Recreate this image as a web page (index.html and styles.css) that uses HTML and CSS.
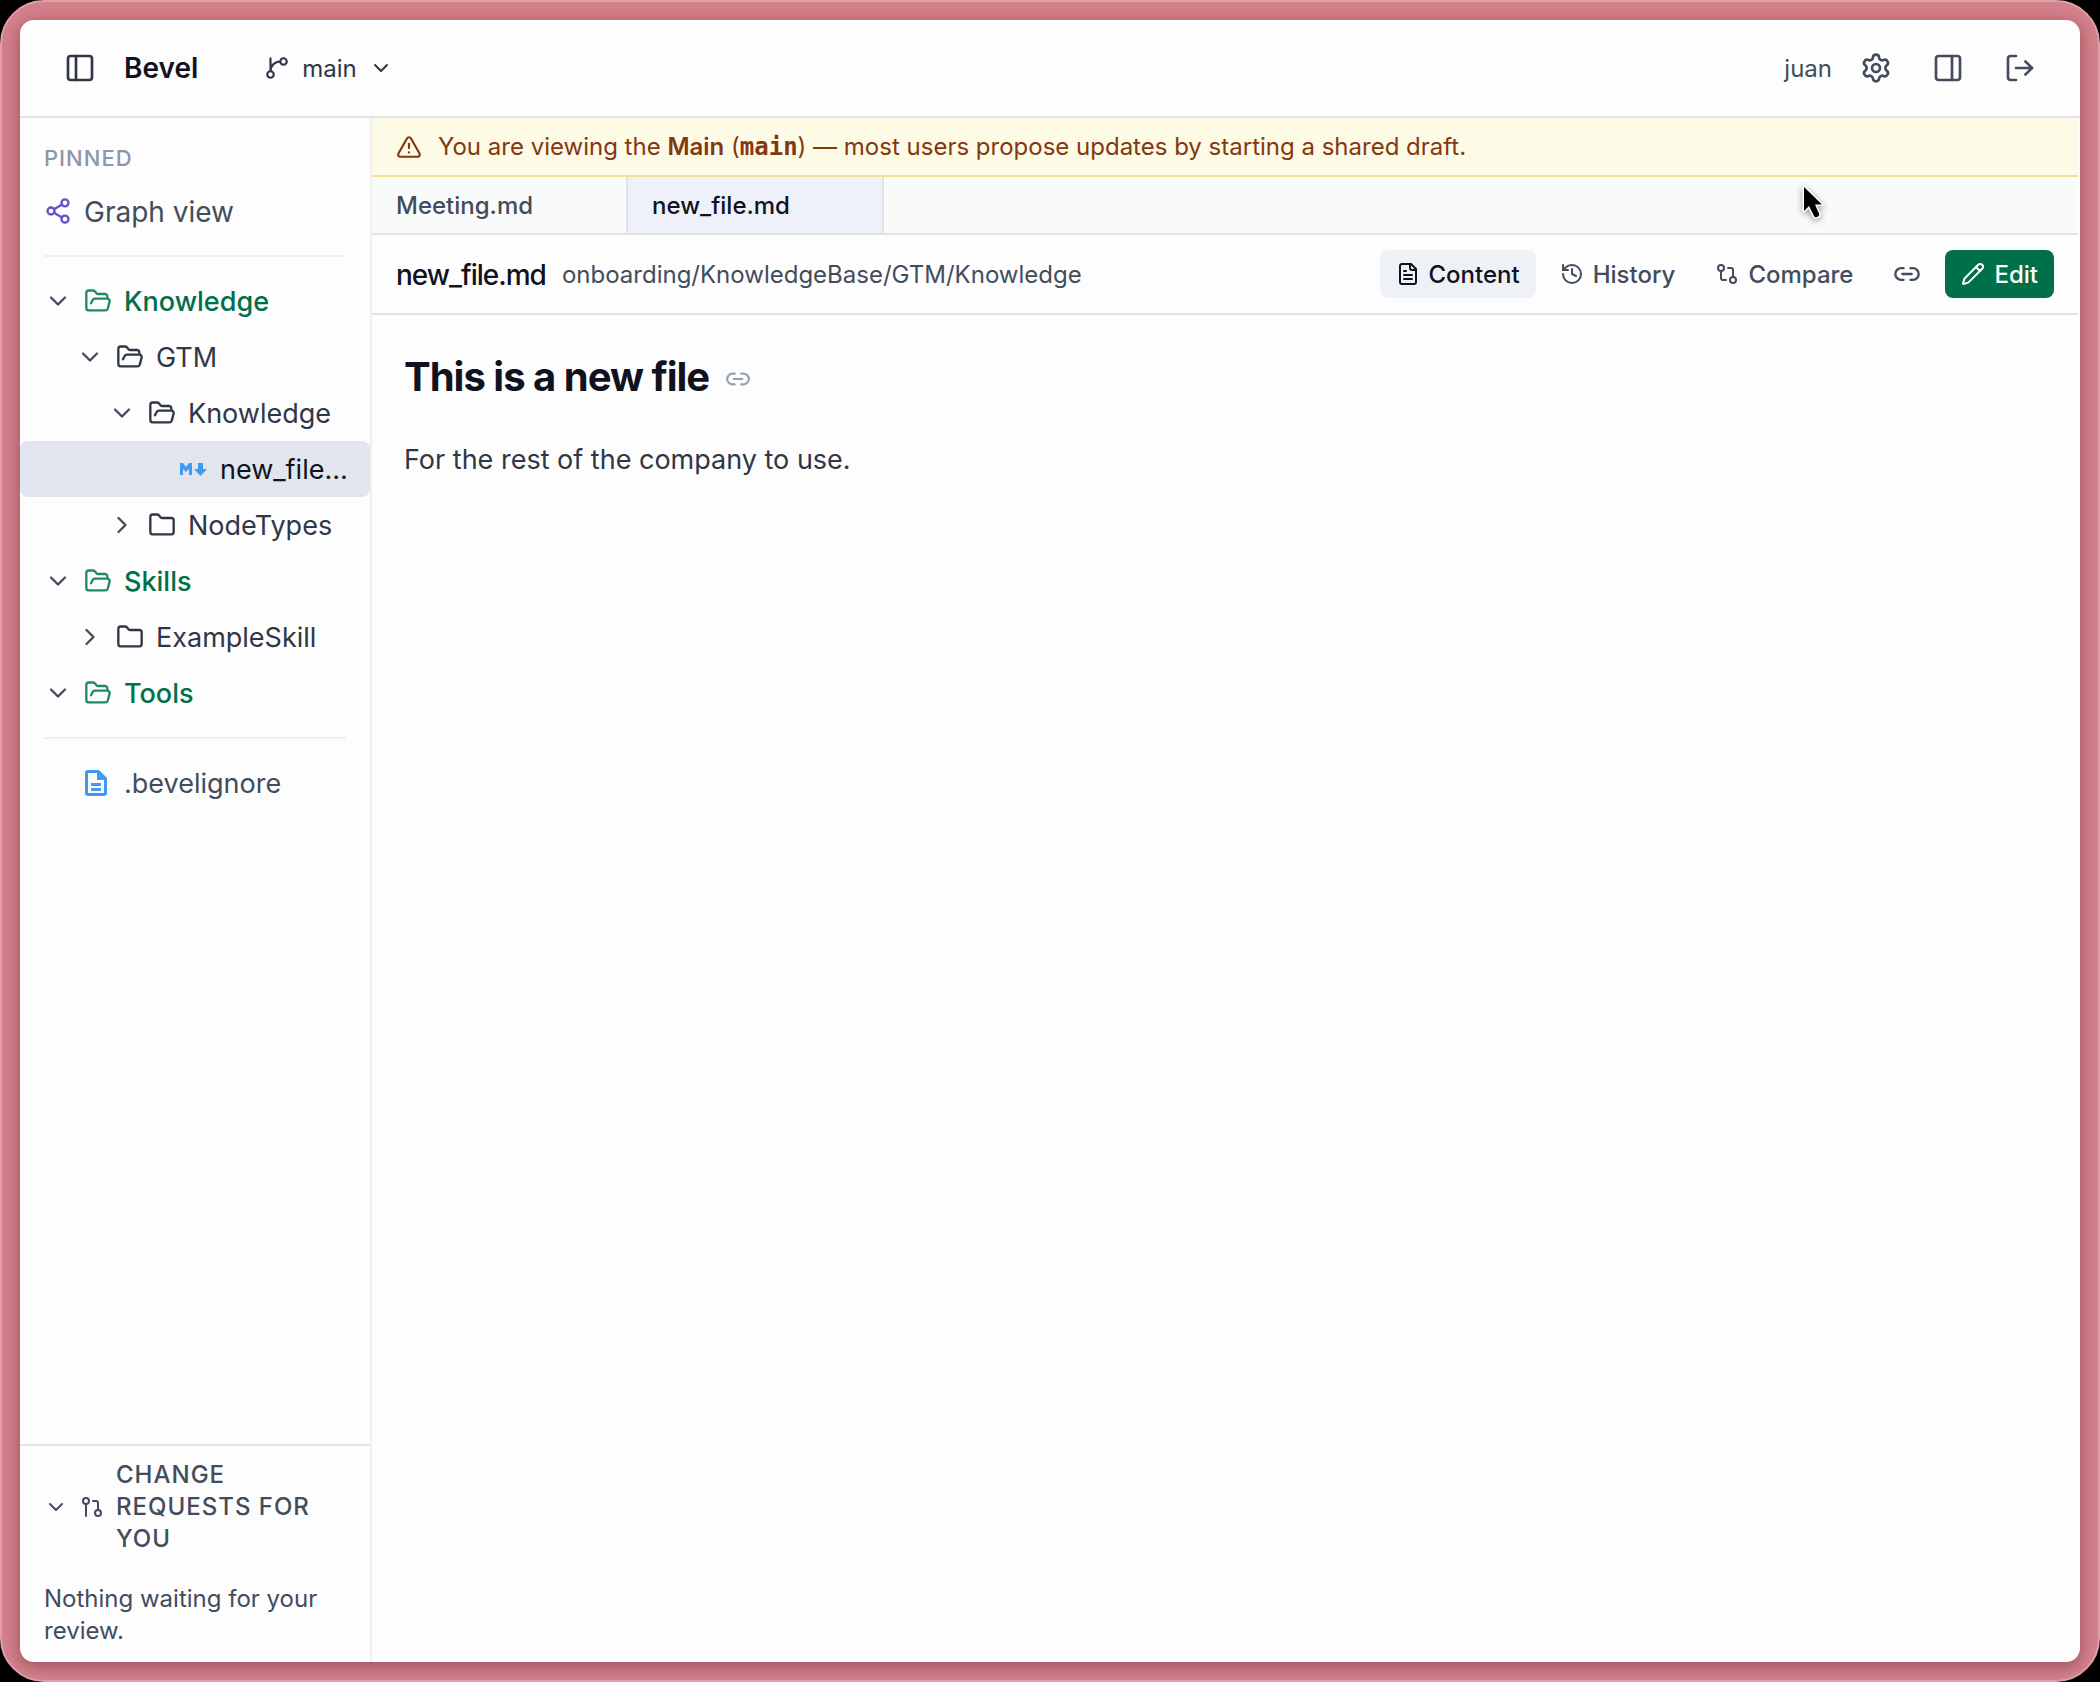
FILE: index.html
```
<!DOCTYPE html>
<html lang="en">
<head>
<meta charset="utf-8">
<meta name="viewport" content="width=device-width, initial-scale=1">
<title>Bevel</title>
<link rel="stylesheet" href="styles.css">
</head>
<body>
<svg class="sprite" aria-hidden="true">
  <symbol id="panel-left" viewBox="0 0 24 24"><rect width="18" height="18" x="3" y="3" rx="2"/><path d="M9 3v18"/></symbol>
  <symbol id="panel-right" viewBox="0 0 24 24"><rect width="18" height="18" x="3" y="3" rx="2"/><path d="M15 3v18"/></symbol>
  <symbol id="branch" viewBox="0 0 24 24"><path d="M15 6a9 9 0 0 0-9 9V3"/><circle cx="18" cy="6" r="3"/><circle cx="6" cy="18" r="3"/></symbol>
  <symbol id="chevron-down" viewBox="0 0 24 24"><path d="m6 9 6 6 6-6"/></symbol>
  <symbol id="chevron-right" viewBox="0 0 24 24"><path d="m9 18 6-6-6-6"/></symbol>
  <symbol id="gear" viewBox="0 0 24 24"><path d="M9.671 4.136a2.34 2.34 0 0 1 4.659 0 2.34 2.34 0 0 0 3.319 1.915 2.34 2.34 0 0 1 2.33 4.033 2.34 2.34 0 0 0 0 3.831 2.34 2.34 0 0 1-2.33 4.033 2.34 2.34 0 0 0-3.319 1.915 2.34 2.34 0 0 1-4.659 0 2.34 2.34 0 0 0-3.32-1.915 2.34 2.34 0 0 1-2.33-4.033 2.34 2.34 0 0 0 0-3.831A2.34 2.34 0 0 1 6.35 6.051a2.34 2.34 0 0 0 3.319-1.915"/><circle cx="12" cy="12" r="3"/></symbol>
  <symbol id="log-out" viewBox="0 0 24 24"><path d="m16 17 5-5-5-5"/><path d="M21 12H9"/><path d="M9 21H5a2 2 0 0 1-2-2V5a2 2 0 0 1 2-2h4"/></symbol>
  <symbol id="share" viewBox="0 0 24 24"><circle cx="18" cy="5" r="3"/><circle cx="6" cy="12" r="3"/><circle cx="18" cy="19" r="3"/><path d="m8.590 13.510 6.830 3.980"/><path d="m15.410 6.510-6.820 3.980"/></symbol>
  <symbol id="folder-open" viewBox="0 0 24 24"><path d="m6 14 1.500-2.900A2 2 0 0 1 9.240 10H20a2 2 0 0 1 1.940 2.500l-1.540 6a2 2 0 0 1-1.950 1.500H4a2 2 0 0 1-2-2V5a2 2 0 0 1 2-2h3.900a2 2 0 0 1 1.690.900l.810 1.200a2 2 0 0 0 1.670.900H18a2 2 0 0 1 2 2v2"/></symbol>
  <symbol id="folder" viewBox="0 0 24 24"><path d="M20 20a2 2 0 0 0 2-2V8a2 2 0 0 0-2-2h-7.900a2 2 0 0 1-1.690-.900L9.600 3.900A2 2 0 0 0 7.930 3H4a2 2 0 0 0-2 2v13a2 2 0 0 0 2 2Z"/></symbol>
  <symbol id="markdown" viewBox="0 0 28 28"><path d="M0 20V8h3l3 4 3-4h3v12H9v-6l-3 3-3-3v6zM18 8h5v6h4l-6.500 7L14 14h4z"/></symbol>
  <symbol id="document" viewBox="0 0 28 28"><path fill-rule="evenodd" d="M4 1h11l8 8v15a3 3 0 0 1-3 3H4a3 3 0 0 1-3-3V4a3 3 0 0 1 3-3zm0 3v20h16V11h-7V4zm3 10h10v3H7zm0 5h10v3H7z"/></symbol>
  <symbol id="alert" viewBox="0 0 24 24"><path d="m21.730 18-8-14a2 2 0 0 0-3.480 0l-8 14A2 2 0 0 0 4 21h16a2 2 0 0 0 1.730-3"/><path d="M12 9v4"/><path d="M12 17h.01"/></symbol>
  <symbol id="file-text" viewBox="0 0 24 24"><path d="M15 2H6a2 2 0 0 0-2 2v16a2 2 0 0 0 2 2h12a2 2 0 0 0 2-2V7Z"/><path d="M14 2v4a2 2 0 0 0 2 2h4"/><path d="M10 9H8"/><path d="M16 13H8"/><path d="M16 17H8"/></symbol>
  <symbol id="history" viewBox="0 0 24 24"><path d="M3 12a9 9 0 1 0 9-9 9.750 9.750 0 0 0-6.740 2.740L3 8"/><path d="M3 3v5h5"/><path d="M12 7v5l4 2"/></symbol>
  <symbol id="compare" viewBox="0 0 24 24"><circle cx="18" cy="18" r="3"/><circle cx="6" cy="6" r="3"/><path d="M13 6h3a2 2 0 0 1 2 2v7"/><path d="M11 18H8a2 2 0 0 1-2-2V9"/></symbol>
  <symbol id="pull-request" viewBox="0 0 24 24"><circle cx="18" cy="18" r="3"/><circle cx="6" cy="6" r="3"/><path d="M13 6h3a2 2 0 0 1 2 2v7"/><path d="M6 9v12"/></symbol>
  <symbol id="link" viewBox="0 0 24 24"><path d="M9 17H7A5 5 0 0 1 7 7h2"/><path d="M15 7h2a5 5 0 1 1 0 10h-2"/><path d="M8 12h8"/></symbol>
  <symbol id="pencil" viewBox="0 0 24 24"><path d="M21.174 6.812a1 1 0 0 0-3.986-3.987L3.842 16.174a2 2 0 0 0-.5.830l-1.321 4.352a.5.5 0 0 0 .623.622l4.353-1.320a2 2 0 0 0 .830-.497z"/><path d="m15 5 4 4"/></symbol>
</svg>

<div class="desktop">
  <div class="window">
    <header class="topbar">
      <button class="icon-button" type="button" aria-label="Toggle sidebar"><svg class="icon icon-lg"><use href="#panel-left"/></svg></button>
      <span class="brand">Bevel</span>
      <button class="branch" type="button">
        <svg class="icon icon-md"><use href="#branch"/></svg>
        <span>main</span>
        <svg class="icon icon-sm"><use href="#chevron-down"/></svg>
      </button>
      <div class="account">
        <span class="user">juan</span>
        <button class="icon-button" type="button" aria-label="Settings"><svg class="icon icon-lg"><use href="#gear"/></svg></button>
        <button class="icon-button" type="button" aria-label="Toggle right panel"><svg class="icon icon-lg"><use href="#panel-right"/></svg></button>
        <button class="icon-button" type="button" aria-label="Log out"><svg class="icon icon-lg"><use href="#log-out"/></svg></button>
      </div>
    </header>

    <div class="workspace">
      <aside class="sidebar">
        <h2 class="section-label">Pinned</h2>
        <a class="row pinned" href="#graph"><svg class="icon"><use href="#share"/></svg><span class="label">Graph view</span></a>
        <hr class="divider">
        <nav class="tree" aria-label="Files">
          <button class="row root" type="button"><svg class="icon chevron"><use href="#chevron-down"/></svg><svg class="icon"><use href="#folder-open"/></svg><span class="label">Knowledge</span></button>
          <button class="row depth-1" type="button"><svg class="icon chevron"><use href="#chevron-down"/></svg><svg class="icon"><use href="#folder-open"/></svg><span class="label">GTM</span></button>
          <button class="row depth-2" type="button"><svg class="icon chevron"><use href="#chevron-down"/></svg><svg class="icon"><use href="#folder-open"/></svg><span class="label">Knowledge</span></button>
          <button class="row depth-3 selected" type="button"><span class="spacer"></span><svg class="icon file-icon"><use href="#markdown"/></svg><span class="label">new_file.md</span></button>
          <button class="row depth-2" type="button"><svg class="icon chevron"><use href="#chevron-right"/></svg><svg class="icon"><use href="#folder"/></svg><span class="label">NodeTypes</span></button>
          <button class="row root" type="button"><svg class="icon chevron"><use href="#chevron-down"/></svg><svg class="icon"><use href="#folder-open"/></svg><span class="label">Skills</span></button>
          <button class="row depth-1" type="button"><svg class="icon chevron"><use href="#chevron-right"/></svg><svg class="icon"><use href="#folder"/></svg><span class="label">ExampleSkill</span></button>
          <button class="row root" type="button"><svg class="icon chevron"><use href="#chevron-down"/></svg><svg class="icon"><use href="#folder-open"/></svg><span class="label">Tools</span></button>
          <hr class="divider">
          <button class="row plain" type="button"><span class="spacer"></span><svg class="icon file-icon"><use href="#document"/></svg><span class="label">.bevelignore</span></button>
        </nav>
        <section class="requests">
          <button class="requests-toggle" type="button">
            <svg class="icon icon-sm"><use href="#chevron-down"/></svg>
            <svg class="icon icon-sm"><use href="#pull-request"/></svg>
            <span>Change requests for you</span>
          </button>
          <p class="requests-empty">Nothing waiting for your review.</p>
        </section>
      </aside>

      <main class="main">
        <div class="banner" role="status">
          <svg class="icon icon-md"><use href="#alert"/></svg>
          <p>You are viewing the <strong>Main</strong> (<code>main</code>) — most users propose updates by starting a shared draft.</p>
        </div>
        <nav class="tabs" aria-label="Open files">
          <button class="tab" type="button">Meeting.md</button>
          <button class="tab active" type="button" aria-current="page">new_file.md</button>
        </nav>
        <div class="toolbar">
          <span class="file-name">new_file.md</span>
          <span class="file-path">onboarding/KnowledgeBase/GTM/Knowledge</span>
          <div class="actions">
            <button class="action current" type="button"><svg class="icon icon-sm"><use href="#file-text"/></svg><span>Content</span></button>
            <button class="action" type="button"><svg class="icon icon-sm"><use href="#history"/></svg><span>History</span></button>
            <button class="action" type="button"><svg class="icon icon-sm"><use href="#compare"/></svg><span>Compare</span></button>
            <button class="action" type="button" aria-label="Copy link"><svg class="icon"><use href="#link"/></svg></button>
            <button class="action edit" type="button"><svg class="icon icon-sm"><use href="#pencil"/></svg><span>Edit</span></button>
          </div>
        </div>
        <article class="document">
          <h1>This is a new file <a class="anchor" href="#this-is-a-new-file" aria-label="Link to heading"><svg class="icon icon-md"><use href="#link"/></svg></a></h1>
          <p>For the rest of the company to use.</p>
        </article>
      </main>
    </div>
  </div>
</div>
<svg class="cursor" viewBox="0 0 28 40" aria-hidden="true"><path d="M3 3v24l5-5 5 10q1 2 3 1l1-.500q2-1 1-3l-4-9h7z"/></svg>
</body>
</html>
```
FILE: styles.css
```
:root {
  --surface: #fdfdfd;
  --line: #e1e3e8;
  --line-soft: #eeeff1;
  --ink: #10131f;
  --text: #2f3747;
  --muted: #434c5c;
  --green: #00704a;
}

* { box-sizing: border-box; }

body {
  margin: 0;
  background: #000;
  color: var(--text);
  font: 400 24px/32px Inter, "Liberation Sans", sans-serif;
}

button {
  margin: 0;
  padding: 0;
  border: 0;
  background: none;
  color: inherit;
  font: inherit;
  text-align: left;
  cursor: pointer;
}

a { color: inherit; text-decoration: none; }
p, h1, h2 { margin: 0; }

.sprite { display: none; }

.icon {
  flex: none;
  width: 28px;
  height: 28px;
  fill: none;
  stroke: currentColor;
  stroke-width: 2;
  stroke-linecap: round;
  stroke-linejoin: round;
}
.icon-sm { width: 24px; height: 24px; }
.icon-md { width: 26px; height: 26px; }
.icon-lg { width: 32px; height: 32px; }

.desktop {
  display: flex;
  min-height: 100vh;
  padding: 18px;
  border: 2px solid #dfa0a7;
  border-radius: 44px;
  background: #d3808a;
}

.window {
  display: flex;
  flex: 1;
  flex-direction: column;
  min-width: 0;
  overflow: hidden;
  border-radius: 14px;
  background: var(--surface);
  box-shadow: 0 4px 16px rgba(60, 10, 20, .4);
}

/* Top bar */
.topbar {
  display: flex;
  align-items: center;
  gap: 16px;
  height: 98px;
  padding: 0 32px;
  border-bottom: 2px solid var(--line);
}
.icon-button {
  display: grid;
  place-items: center;
  width: 56px;
  height: 56px;
  color: var(--text);
}
.brand {
  color: var(--ink);
  font-size: 28px;
  font-weight: 600;
}
.branch {
  display: flex;
  align-items: center;
  gap: 12px;
  height: 56px;
  margin-left: 34px;
  padding: 0 16px;
}
.branch span, .user { padding-top: 2px; }
.account {
  display: flex;
  align-items: center;
  gap: 16px;
  margin-left: auto;
  color: var(--muted);
}
.account .icon-button { color: var(--muted); }

.workspace { display: flex; flex: 1; min-height: 0; }

/* Sidebar */
.sidebar {
  display: flex;
  flex: none;
  flex-direction: column;
  width: 352px;
  padding-top: 24px;
  border-right: 2px solid var(--line-soft);
}
.section-label {
  margin-bottom: 9px;
  padding: 0 24px;
  color: #8b96aa;
  font-size: 22px;
  font-weight: 500;
  line-height: 32px;
  letter-spacing: 1px;
  text-transform: uppercase;
}
.row {
  display: flex;
  align-items: center;
  gap: 12px;
  width: 100%;
  height: 56px;
  padding: 0 22px 0 24px;
  border-radius: 8px;
  font-size: 27px;
}
.label {
  min-width: 0;
  padding-top: 2px;
  overflow: hidden;
  text-overflow: ellipsis;
  white-space: nowrap;
}
.spacer { flex: none; width: 28px; }
.pinned { color: var(--muted); font-size: 28px; }
.pinned .icon { color: #6a4fcb; }
.divider {
  margin: 16px 24px;
  border: 0;
  border-top: 2px solid var(--line-soft);
}
.root { color: var(--green); font-weight: 500; }
.root .icon { color: #1f8a63; }
.row .chevron { color: var(--muted); }
.depth-1 { padding-left: 56px; }
.depth-2 { padding-left: 88px; }
.depth-3 { padding-left: 120px; }
.selected { background: #e0e5ee; color: var(--ink); }
.plain { color: var(--muted); }
.file-icon { fill: #3f9bf0; stroke: none; }

.requests {
  margin-top: auto;
  padding: 13px 24px 15px;
  border-top: 2px solid #e3e4e6;
  color: var(--muted);
}
.requests-toggle {
  display: flex;
  align-items: center;
  gap: 12px;
  width: 100%;
  margin-bottom: 28px;
  font-weight: 500;
  letter-spacing: 1px;
  text-transform: uppercase;
}

/* Main column */
.main { flex: 1; min-width: 0; margin-right: 2px; }
.banner {
  display: flex;
  align-items: center;
  gap: 16px;
  height: 59px;
  padding: 0 24px;
  border-bottom: 2px solid #f3e193;
  background: #fdfae6;
  color: #83380f;
}
.banner strong { font-weight: 600; }
.banner code {
  font-family: "DejaVu Sans Mono", "Liberation Mono", monospace;
  font-size: 24px;
  font-weight: 700;
}
.tabs {
  display: flex;
  height: 58px;
  border-bottom: 2px solid var(--line);
  background: #f9fbfb;
}
.tab {
  width: 256px;
  padding: 2px 24px 0;
  border-right: 2px solid var(--line);
  color: var(--muted);
  font-weight: 500;
}
.tab.active { background: #eef1fa; color: var(--ink); }
.toolbar {
  display: flex;
  align-items: center;
  gap: 16px;
  height: 80px;
  padding: 0 24px;
  border-bottom: 2px solid var(--line);
}
.file-name {
  padding-top: 2px;
  color: var(--ink);
  font-size: 28px;
  font-weight: 500;
  letter-spacing: -1px;
}
.file-path { padding-top: 2px; color: var(--muted); }
.actions { display: flex; gap: 8px; margin-left: auto; }
.action {
  display: flex;
  align-items: center;
  gap: 9px;
  height: 48px;
  padding: 0 16px;
  border-radius: 8px;
  color: var(--muted);
  font-weight: 500;
}
.action span { padding-top: 2px; }
.action.current { background: #eef1f6; color: var(--ink); }
.action.edit { background: var(--green); color: #fff; }

.document { padding: 38px 32px; }
.document h1 {
  display: flex;
  align-items: center;
  gap: 16px;
  margin-bottom: 37px;
  color: var(--ink);
  font-size: 40px;
  font-weight: 700;
  line-height: 48px;
  letter-spacing: -1px;
}
.document p { font-size: 27px; line-height: 44px; }
.anchor { display: grid; padding-top: 3px; color: #94a0b4; }

/* Mouse pointer floating over the page */
.cursor {
  position: absolute;
  top: 184px;
  left: 1801px;
  width: 28px;
  height: 40px;
  fill: #000;
  stroke: #fff;
  stroke-width: 3;
  stroke-linejoin: round;
  paint-order: stroke;
  filter: drop-shadow(0 2px 3px rgba(0, 0, 0, .4));
}
```
